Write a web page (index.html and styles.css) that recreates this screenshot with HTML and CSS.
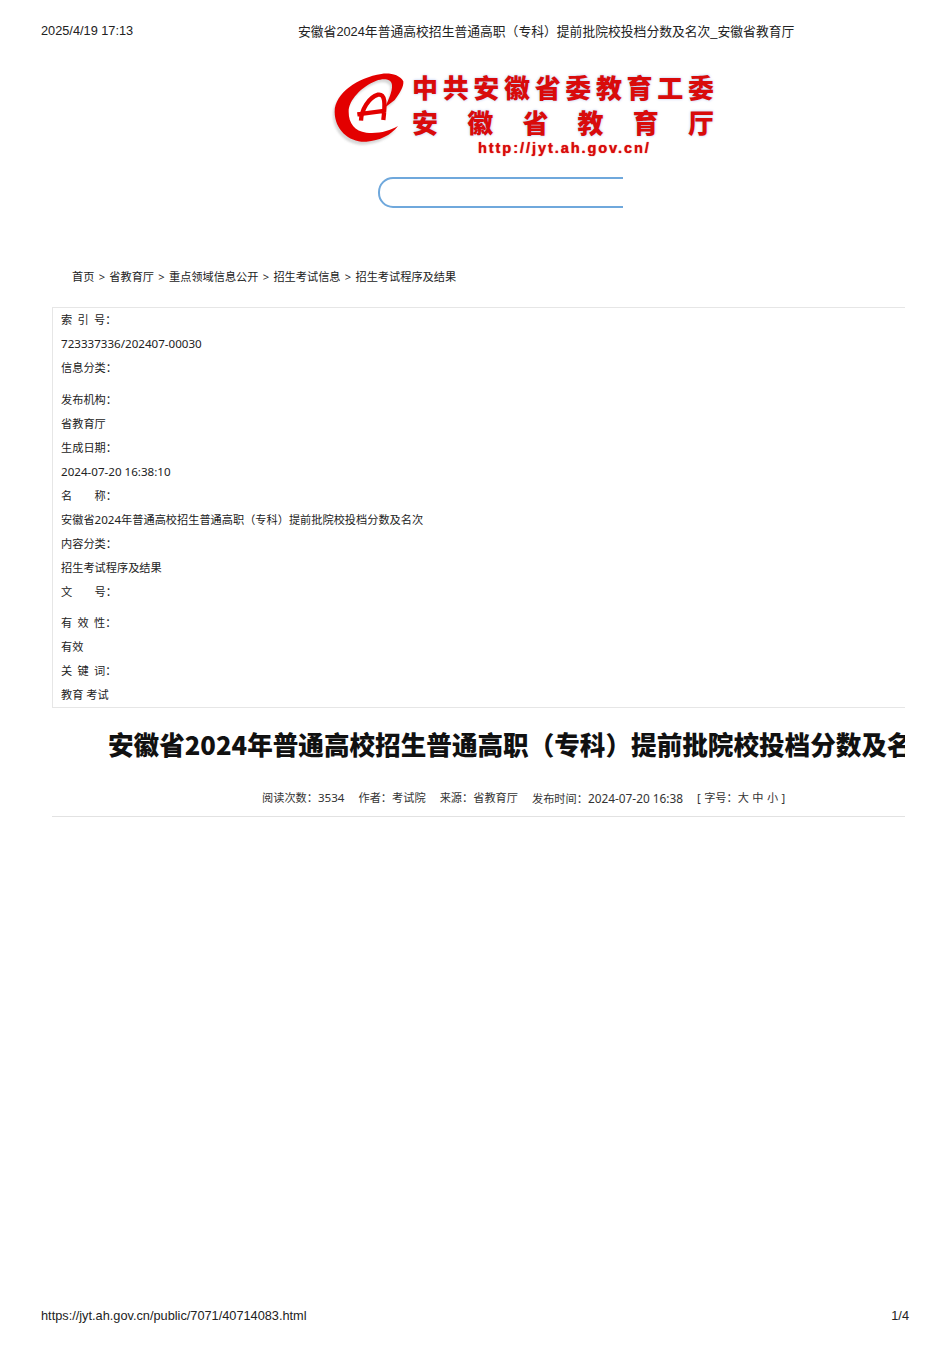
FILE: index.html
```html
<!DOCTYPE html>
<html lang="zh">
<head>
<meta charset="utf-8">
<title>安徽省教育厅</title>
<link rel="stylesheet" href="styles.css">
</head>
<body>
<div class="page">
  <header class="print-head">
    <span class="print-date">2025/4/19 17:13</span>
    <span class="print-title">安徽省2024年普通高校招生普通高职（专科）提前批院校投档分数及名次_安徽省教育厅</span>
  </header>
  <main class="content">
    <div class="logo">
      <svg class="logo-mark" viewBox="0 0 240 240" aria-hidden="true">
        <path class="mark-shadow" d="M226 34C215 14 185 8 160 12C90 22 20 70 20 125C20 180 65 218 115 215C155 212 190 195 210 168C185 183 150 192 115 188C80 183 62 160 62 125C62 90 100 50 145 32C165 25 190 25 192 45C194 65 180 90 172 112L200 90C215 70 228 50 226 34Z"/>
        <path class="mark" d="M226 34C215 14 185 8 160 12C90 22 20 70 20 125C20 180 65 218 115 215C155 212 190 195 210 168C185 183 150 192 115 188C80 183 62 160 62 125C62 90 100 50 145 32C165 25 190 25 192 45C194 65 180 90 172 112L200 90C215 70 228 50 226 34Z"/>
        <path class="mark-line" d="M99 152C100 120 122 82 150 74C172 70 172 100 166 150M88 133L174 122"/>
      </svg>
      <div class="logo-text">
        <div class="logo-line logo-line-top"><span>中</span><span>共</span><span>安</span><span>徽</span><span>省</span><span>委</span><span>教</span><span>育</span><span>工</span><span>委</span></div>
        <div class="logo-line logo-line-main"><span>安</span><span>徽</span><span>省</span><span>教</span><span>育</span><span>厅</span></div>
        <div class="logo-url">http://jyt.ah.gov.cn/</div>
      </div>
    </div>
    <div class="search-wrap"><div class="search"></div></div>
    <nav class="crumbs">
      <span>首页</span><i>&gt;</i><span>省教育厅</span><i>&gt;</i><span>重点领域信息公开</span><i>&gt;</i><span>招生考试信息</span><i>&gt;</i><span>招生考试程序及结果</span>
    </nav>
    <section class="info">
      <p class="spaced">索 引 号：</p>
      <p class="n">723337336/202407-00030</p>
      <p class="gap-after">信息分类：</p>
      <p>发布机构：</p>
      <p>省教育厅</p>
      <p>生成日期：</p>
      <p class="n">2024-07-20 16:38:10</p>
      <p>名　　称：</p>
      <p>安徽省<span class="n">2024</span>年普通高校招生普通高职（专科）提前批院校投档分数及名次</p>
      <p>内容分类：</p>
      <p>招生考试程序及结果</p>
      <p class="gap-after-s">文　　号：</p>
      <p class="spaced">有 效 性：</p>
      <p>有效</p>
      <p class="spaced">关 键 词：</p>
      <p>教育 考试</p>
    </section>
    <h1 class="title">安徽省2024年普通高校招生普通高职（专科）提前批院校投档分数及名次</h1>
    <div class="meta">
      <span>阅读次数：<span class="n">3534</span></span><span>作者：考试院</span><span>来源：省教育厅</span><span>发布时间：<span class="n-wide">2024-07-20 16:38</span></span><span class="size-ctl">[ 字号：大 中 小 ]</span>
    </div>
  </main>
  <footer class="print-foot">
    <span>https://jyt.ah.gov.cn/public/7071/40714083.html</span>
    <span>1/4</span>
  </footer>
</div>
</body>
</html>
```

FILE: styles.css
```css
* { box-sizing: border-box; }
html, body { margin: 0; padding: 0; background: #fff; }
body { font-family: "Noto Sans", "Noto Sans CJK SC", sans-serif; color: #222; }
.page { width: 950px; height: 1345px; display: flex; flex-direction: column; overflow: hidden; }
.print-head { height: 64px; padding: 22px 41px 0; display: flex; font: 12.75px/18px "Liberation Sans", "Noto Sans CJK SC", sans-serif; color: #222; }
.print-date { width: 257px; }
.print-title { line-height: 19px; font-size: 12.8px; }
.content { flex: 1; margin-left: 52px; width: 853px; overflow: hidden; }
.logo { display: flex; height: 85px; margin-left: 276px; }
.logo-mark { width: 80px; height: 80px; margin-top: 6px; flex: none; overflow: visible; }
.mark { fill: #e30000; }
.mark-line { fill: none; stroke: #e30000; stroke-width: 13; }
.mark-shadow { fill: #bdbdbd; opacity: .6; filter: blur(3px); transform: translate(-5px, 9px); }
.logo-text { margin-left: 4px; width: 302px; margin-top: 5px; font-family: "Noto Sans CJK SC", sans-serif; font-weight: 900; color: #d90b0b; text-shadow: 0 0 3px #b4c4ee; }
.logo-line { display: flex; justify-content: space-between; font-size: 26px; line-height: 36px; }
.logo-line-main { height: 33px; line-height: 33px; }
.logo-url { margin-left: 66px; margin-top: 2px; font: bold 14.5px/16px "Liberation Sans", sans-serif; letter-spacing: 1.95px; text-shadow: 0 0 1px #d90b0b; }
.search-wrap { margin-top: 28px; margin-left: 326px; width: 245px; height: 31px; overflow: hidden; }
.search { width: 280px; height: 31px; border: 2px solid #6fa8dc; border-radius: 15px; }
.crumbs { margin-top: 61px; margin-left: 20px; font-size: 11.2px; line-height: 16px; display: flex; color: #222; }
.crumbs i { font-style: normal; margin: 0 4.25px; }
.info { margin-top: 22px; height: 401px; border: 1px solid #e6e6e6; border-right: 0; padding: 0 8px; font-size: 11.2px; }
.info p { margin: 0; height: 24px; line-height: 24px; white-space: nowrap; }
.info .gap-after { height: 32px; line-height: 24px; }
.info .gap-after-s { height: 31px; line-height: 24px; }
.info .spaced { word-spacing: 2.4px; }
.n { font-size: 11.6px; }
.n-wide { font-size: 11.85px; }
.size-ctl { word-spacing: .5px; }
.title { margin: 18px 0 0 56px; font: 900 25.6px/36px "Noto Sans CJK SC", sans-serif; color: #111; white-space: nowrap; }
.meta { margin-top: 27px; height: 28px; border-bottom: 1px solid #e2e2e2; padding-left: 210px; font-size: 11.2px; line-height: 18px; display: flex; gap: 14px; white-space: nowrap; color: #333; }
.print-foot { height: 39px; padding: 1px 41px 0; display: flex; justify-content: space-between; font: 12.75px/18px "Liberation Sans", sans-serif; color: #222; }
```
